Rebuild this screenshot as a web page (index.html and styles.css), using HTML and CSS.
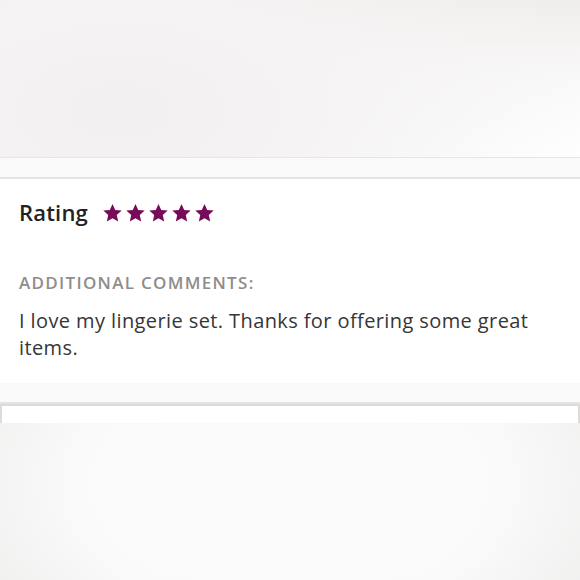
FILE: index.html
```html
<!DOCTYPE html>
<html lang="en">
<head>
  <meta charset="UTF-8" />
  <meta name="viewport" content="width=device-width, initial-scale=1" />
  <title>Review</title>
  <link rel="stylesheet" href="styles.css">
</head>
<body>

  <div class="backdrop top"></div>

  <div class="gap"></div>

  <section class="review">
    <div class="rating">
      <h2>Rating</h2>
      <div class="stars">
        <svg viewBox="0 0 24 24"><path d="M12 1l3.1 6.9 7.4.8-5.6 5 1.6 7.3L12 17.3 5.5 21l1.6-7.3-5.6-5 7.4-.8z"/></svg>
        <svg viewBox="0 0 24 24"><path d="M12 1l3.1 6.9 7.4.8-5.6 5 1.6 7.3L12 17.3 5.5 21l1.6-7.3-5.6-5 7.4-.8z"/></svg>
        <svg viewBox="0 0 24 24"><path d="M12 1l3.1 6.9 7.4.8-5.6 5 1.6 7.3L12 17.3 5.5 21l1.6-7.3-5.6-5 7.4-.8z"/></svg>
        <svg viewBox="0 0 24 24"><path d="M12 1l3.1 6.9 7.4.8-5.6 5 1.6 7.3L12 17.3 5.5 21l1.6-7.3-5.6-5 7.4-.8z"/></svg>
        <svg viewBox="0 0 24 24"><path d="M12 1l3.1 6.9 7.4.8-5.6 5 1.6 7.3L12 17.3 5.5 21l1.6-7.3-5.6-5 7.4-.8z"/></svg>
      </div>
    </div>
    <h3 class="label">Additional comments:</h3>
    <p class="comment">I love my lingerie set. Thanks for offering some great items.</p>
  </section>

  <div class="gap"></div>

  <section class="next-card"></section>

  <div class="backdrop bottom"></div>

</body>
</html>
```

FILE: styles.css
```css
body {
  margin: 0;
  font-family: 'Open Sans', 'Noto Sans', sans-serif;
  background: #fafafa;
  overflow: hidden;
}

.backdrop.top {
  height: 157px;
  border-bottom: 1px solid #e8e6e3;
  background:
    radial-gradient(ellipse 480px 260px at 120px 110px, #f1eff0 0%, #f5f3f3 40%, rgba(255,255,255,0) 100%),
    linear-gradient(to bottom, #f0eeec 0%, #faf9f9 50%, #ffffff 100%);
}

.gap {
  height: 19px;
  background: #fafafa;
  border-bottom: 2px solid #e4e3e1;
}

.review {
  background: #fff;
  padding: 19px 19px 22px;
  color: #2a2a2a;
}

.rating {
  display: flex;
  align-items: center;
  gap: 14px;
  height: 28px;
}

.rating h2 {
  margin: 0;
  font-size: 22px;
  font-weight: 600;
  letter-spacing: 0.2px;
  color: #222;
}

.stars {
  display: flex;
  gap: 2px;
  margin-top: 2px;
}

.stars svg {
  width: 21px;
  height: 21px;
  fill: #780b59;
}

.label {
  margin: 45px 0 0;
  font-size: 17px;
  font-weight: 600;
  letter-spacing: 1.3px;
  text-transform: uppercase;
  color: #8f8d8a;
}

.comment {
  margin: 13px 0 0;
  font-size: 20px;
  line-height: 27px;
  letter-spacing: 0.4px;
  color: #363636;
}

.next-card {
  height: 17px;
  background: #fff;
  border: 2px solid #dcdbd9;
  border-bottom: none;
}

.backdrop.bottom {
  height: 160px;
  background:
    radial-gradient(ellipse 360px 220px at 290px 60px, #fbfbfb 0%, #fafafa 60%, #efeeed 100%);
}
```
